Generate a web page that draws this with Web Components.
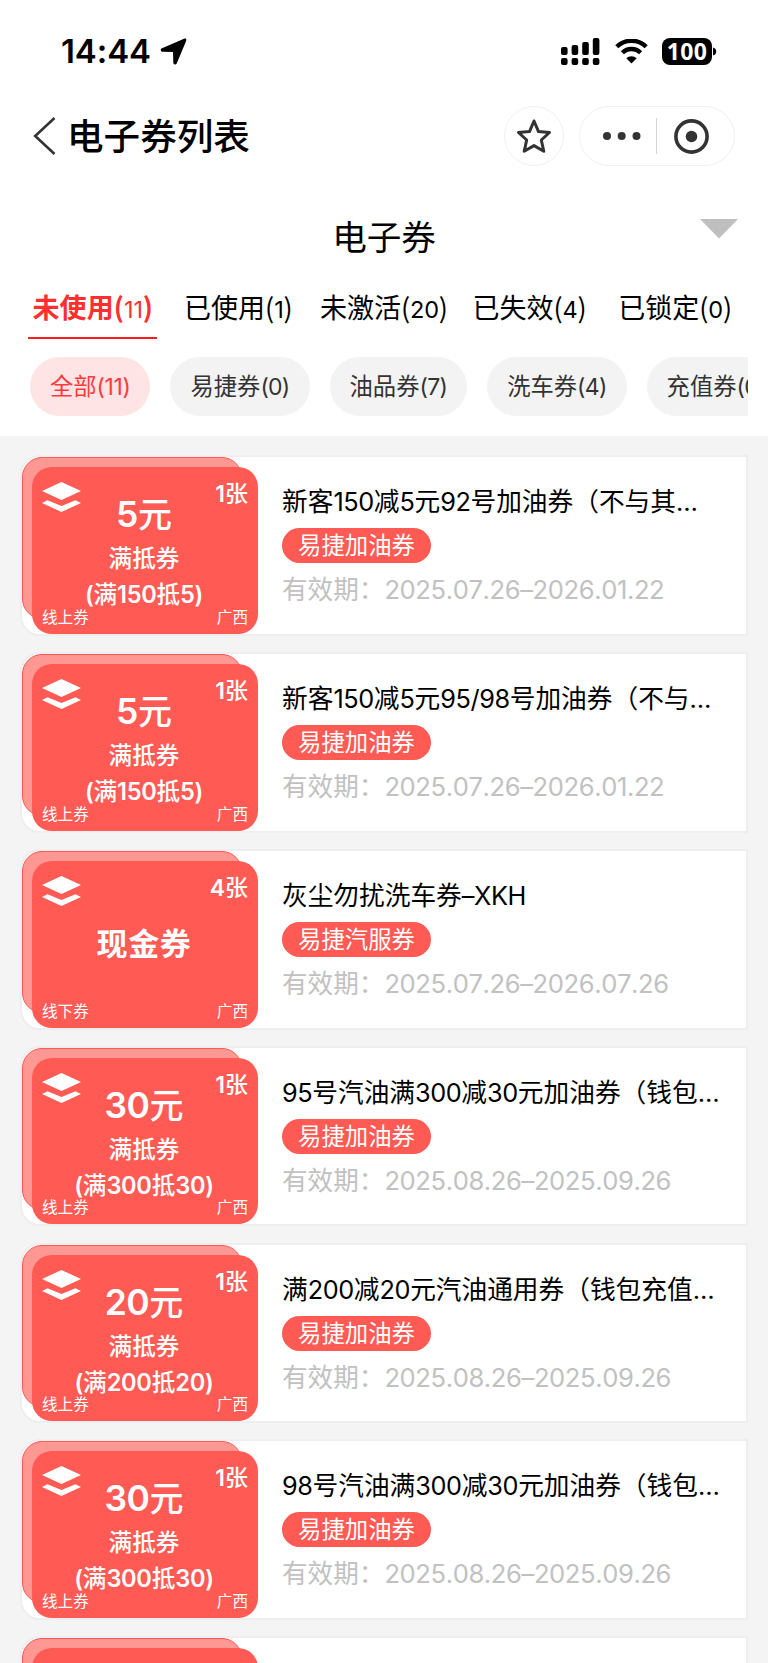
<!DOCTYPE html>
<html lang="zh-CN">
<head>
<meta charset="UTF-8">
<title>电子券列表</title>
<style>
    body {
        margin: 0;
        width: 768px;
        height: 1663px;
        overflow: hidden;
        background: #f4f4f4;
        color: #000;
        font-family: Inter, "Noto Sans CJK SC", sans-serif;
    }
</style>
</head>
<body>
<coupon-app></coupon-app>
<script>
const CJK = '"Noto Sans CJK SC", sans-serif';

// latin runs sit next to CJK glyphs, so they get their own size and tracking
function mixed(text) {
    return text.replace(/[0-9A-Z().\/–…-]+/g, run => `<span class="n">${run}</span>`);
}

class StatusBar extends HTMLElement {
    // language=CSS
    static style = `
        :host {
            display: flex;
            align-items: center;
            height: 102px;
            padding: 0 51px 0 61px;
        }
        .time { font: 600 33px/40px Inter, sans-serif; letter-spacing: -0.1px; width: 99px; white-space: nowrap; }
        .gap { flex: 1; }
        svg { display: block; }
        .wifi { margin: 0 14px 0 15px; }
        .battery {
            width: 50px;
            height: 27px;
            border-radius: 8px;
            background: #000;
            color: #fff;
            font: 700 23px/27px "Noto Sans", sans-serif;
            letter-spacing: 0.3px;
            text-align: center;
        }
    `;

    constructor() {
        super();
        this.attachShadow({mode: 'open'});
    }

    connectedCallback() {
        const bars = [0, 1, 2, 3].map(i => {
            const top = [9, 7, 4, 0][i];
            return `<rect x="${i * 10.6}" y="${top}" width="6.6" height="${17 - top}" rx="2"/>
                    <rect x="${i * 10.6}" y="20" width="6.6" height="7" rx="2"/>`;
        }).join('');

        this.shadowRoot.innerHTML = `
          <style>${StatusBar.style}</style>
          <div class="time">14:44</div>
          <svg width="27" height="27" viewBox="0 0 27 27"><path d="M24 .7 2 10.200c-2 .9-1.600 3.400.6 3.500l10.400.3.300 10.600c.1 2.200 2.600 2.500 3.500.6L26 3.200C26.800 1.300 26 0 24 .7z"/></svg>
          <div class="gap"></div>
          <svg width="39" height="27" viewBox="0 0 39 27">${bars}</svg>
          <svg class="wifi" width="33" height="25" viewBox="0 0 33 25">
            <path d="M1.800 7.800a20.800 20.800 0 0 1 29.400 0M7.400 13.700a12.900 12.900 0 0 1 18.200 0" fill="none" stroke="#000" stroke-width="4.400"/>
            <path d="M16.500 24.500 11.300 19.300a7.400 7.400 0 0 1 10.400 0z"/>
          </svg>
          <div class="battery">100</div>
          <svg width="5" height="9" viewBox="0 0 5 9"><path d="M1 .5c2.700.8 3.200 2.500 3.200 4S3.700 7.700 1 8.500z"/></svg>
        `;
    }
}

class NavBar extends HTMLElement {
    // language=CSS
    static style = `
        :host {
            display: flex;
            align-items: center;
            height: 68px;
            padding: 0 33px;
        }
        svg { display: block; }
        h1 { flex: 1; margin: -2px 0 0 11px; font: 500 36.6px/50px ${CJK}; }
        .round, .pill {
            box-sizing: border-box;
            height: 60px;
            border: 1px solid #f0f0f0;
            border-radius: 30px;
            display: flex;
            align-items: center;
        }
        .round { width: 60px; justify-content: center; margin-right: 15px; }
        .pill { width: 156px; padding-left: 22px; }
        .line { width: 1px; height: 36px; background: #d5d5d5; margin: 0 17px 0 15px; }
    `;

    constructor() {
        super();
        this.attachShadow({mode: 'open'});
    }

    connectedCallback() {
        this.shadowRoot.innerHTML = `
          <style>${NavBar.style}</style>
          <svg width="23" height="38" viewBox="0 0 23 38"><path d="M21.500 1 2.200 19 21.500 37" fill="none" stroke="#333" stroke-width="2.600"/></svg>
          <h1><slot></slot></h1>
          <div class="round">
            <svg width="36" height="36" viewBox="0 0 36 36"><path d="m18 3 4.500 10.600L33.500 14.500 25.300 22 27.800 33.300 18 27.600 8.200 33.300 10.700 22 2.500 14.500 13.500 13.600z" fill="none" stroke="#333" stroke-width="3" stroke-linejoin="round"/></svg>
          </div>
          <div class="pill">
            <svg width="39" height="8" viewBox="0 0 39 8" fill="#333"><circle cx="5" cy="4" r="4"/><circle cx="19.700" cy="4" r="4"/><circle cx="34.500" cy="4" r="4"/></svg>
            <div class="line"></div>
            <svg width="35" height="35" viewBox="0 0 35 35"><circle cx="17.500" cy="17.500" r="15.600" fill="none" stroke="#333" stroke-width="3.600"/><circle cx="17.500" cy="17.500" r="5.800" fill="#333"/></svg>
          </div>
        `;
    }
}

class TabItem extends HTMLElement {
    // language=CSS
    static style = `
        :host {
            flex: 1;
            display: flex;
            justify-content: center;
            font: 400 27px/38px ${CJK};
            white-space: nowrap;
        }
        div { box-sizing: border-box; height: 51px; padding: 0 4px; border-bottom: 2px solid transparent; }
        span { font: 400 23.5px/1 Inter, sans-serif; letter-spacing: -0.2px; }
        :host([active]) { color: #fe302f; font-weight: 700; letter-spacing: 0.1px; }
        :host([active]) div { border-color: #fd1f1f; }
    `;

    constructor() {
        super();
        this.attachShadow({mode: 'open'});
    }

    connectedCallback() {
        this.shadowRoot.innerHTML = `
          <style>${TabItem.style}</style>
          <div><slot></slot>(<span>${this.getAttribute('count')}</span>)</div>
        `;
    }
}

class FilterChip extends HTMLElement {
    // language=CSS
    static style = `
        :host {
            flex: none;
            box-sizing: border-box;
            height: 59px;
            padding: 0 20px;
            border-radius: 30px;
            background: #f3f3f3;
            color: #333;
            font: 400 23.300px/56px ${CJK};
            white-space: nowrap;
        }
        span { font: 400 23px/1 Inter, sans-serif; letter-spacing: -0.700px; }
        :host([active]) { background: #ffe4e6; color: #fe3a3a; }
        :host([active]) span { letter-spacing: -0.400px; }
    `;

    constructor() {
        super();
        this.attachShadow({mode: 'open'});
    }

    connectedCallback() {
        this.shadowRoot.innerHTML = `
          <style>${FilterChip.style}</style>
          <slot></slot><span>(${this.getAttribute('count')})</span>
        `;
    }
}

class CouponTicket extends HTMLElement {
    // language=CSS
    static style = `
        :host {
            flex: none;
            display: grid;
            width: 236px;
            color: #fff;
            font-family: Inter, ${CJK};
            white-space: nowrap;
        }
        .back, .front { grid-area: 1 / 1; box-sizing: border-box; border-radius: 20px; background: #ff5a54; }
        .back { width: 220px; height: 162px; background: #ff9792; border: 1.500px solid #ff5a54; }
        .front {
            margin: 10px 0 0 10px;
            display: grid;
            grid-template-rows: 29px minmax(0, 1fr) 24px;
            padding: 15px 10px 5px;
        }
        .row { display: flex; justify-content: space-between; }
        svg { display: block; }
        .count { font-size: 23px; font-weight: 500; line-height: 24px; }
        .count .n { font-size: 23px; font-weight: 600; }
        .body {
            display: flex;
            flex-direction: column;
            align-items: center;
            font-size: 23.600px;
            font-weight: 500;
            margin: -28px 2px -13px 0;
        }
        .amount { font-size: 34px; line-height: 50px; margin-top: 7px; }
        .amount .n { font-size: 35.500px; font-weight: 600; letter-spacing: -0.500px; }
        .kind { line-height: 34px; margin-top: 2px; }
        .rule { line-height: 34px; margin-top: 2px; }
        .rule .n { font-weight: 600; letter-spacing: -0.300px; }
        .cash { font-size: 31px; font-weight: 700; line-height: 40px; margin: auto; letter-spacing: 0.600px; }
        .foot { font-size: 15.600px; line-height: 22px; align-items: end; }
    `;

    constructor() {
        super();
        this.attachShadow({mode: 'open'});
    }

    connectedCallback() {
        const rule = this.getAttribute('rule');
        const amount = this.getAttribute('amount');
        const body = rule
            ? `<div class="amount">${mixed(amount)}</div><div class="kind">满抵券</div><div class="rule">${mixed(rule)}</div>`
            : `<div class="cash">${amount}</div>`;

        // a ticket without an amount is only the two stacked shapes
        const content = `
            <div class="row">
              <svg width="39" height="30" viewBox="0 0 39 30" fill="#fff"><path d="M19.500 0 39 9 19.500 18 0 9z"/><path d="M5.500 18.300 19.500 24 33.500 18.300 39 20.900 19.500 30 0 20.900z"/></svg>
              <div class="count">${mixed(this.getAttribute('count') || '')}</div>
            </div>
            <div class="body">${body}</div>
            <div class="row foot"><span>${this.getAttribute('channel')}</span><span>广西</span></div>
        `;

        this.shadowRoot.innerHTML = `
          <style>${CouponTicket.style}</style>
          <div class="back"></div>
          <div class="front">${amount ? content : ''}</div>
        `;
    }
}

class CouponCard extends HTMLElement {
    // language=CSS
    static style = `
        :host {
            flex: none;
            box-sizing: border-box;
            display: flex;
            height: 180.800px;
            background: #fff;
            border: 2px solid #eee;
            border-radius: 20px 0 0 20px;
            font-family: Inter, ${CJK};
            font-kerning: none;
            white-space: nowrap;
        }
        .info { padding: 26px 0 0 24px; }
        .name { font-size: 25.700px; line-height: 38px; }
        .name .n { font-size: 25.300px; letter-spacing: -0.400px; }
        .tag {
            display: table;
            padding: 0 16px 0 16px;
            margin-top: 7px;
            border-radius: 18px;
            background: #ff5a54;
            color: #fff;
            font-size: 23.400px;
            line-height: 35px;
        }
        .date { margin-top: 8px; font-size: 25.600px; line-height: 38px; color: #c1c1c1; }
        .date .n { letter-spacing: -0.400px; }
    `;

    constructor() {
        super();
        this.attachShadow({mode: 'open'});
    }

    connectedCallback() {
        const name = this.getAttribute('name');
        const info = name ? `
          <div class="info">
            <div class="name">${mixed(name)}</div>
            <div class="tag">${this.getAttribute('tag')}</div>
            <div class="date">${mixed('有效期：' + this.getAttribute('date'))}</div>
          </div>` : '';

        this.shadowRoot.innerHTML = `
          <style>${CouponCard.style}</style>
          <slot></slot>
          ${info}
        `;
    }
}

class CouponApp extends HTMLElement {
    static tabs = [['未使用', 11], ['已使用', 1], ['未激活', 20], ['已失效', 4], ['已锁定', 0]];

    static chips = [['全部', 11], ['易捷券', 0], ['油品券', 7], ['洗车券', 4], ['充值券', 0]];

    static coupons = [
        ['5元', '(满150抵5)', '1张', '线上券', '新客150减5元92号加油券（不与其…', '易捷加油券', '2025.07.26–2026.01.22'],
        ['5元', '(满150抵5)', '1张', '线上券', '新客150减5元95/98号加油券（不与…', '易捷加油券', '2025.07.26–2026.01.22'],
        ['现金券', '', '4张', '线下券', '灰尘勿扰洗车券–XKH', '易捷汽服券', '2025.07.26–2026.07.26'],
        ['30元', '(满300抵30)', '1张', '线上券', '95号汽油满300减30元加油券（钱包…', '易捷加油券', '2025.08.26–2025.09.26'],
        ['20元', '(满200抵20)', '1张', '线上券', '满200减20元汽油通用券（钱包充值…', '易捷加油券', '2025.08.26–2025.09.26'],
        ['30元', '(满300抵30)', '1张', '线上券', '98号汽油满300减30元加油券（钱包…', '易捷加油券', '2025.08.26–2025.09.26'],
    ];

    // language=CSS
    static style = `
        :host { display: flex; flex-direction: column; height: 1663px; overflow: hidden; }
        header { flex: none; background: #fff; height: 436px; }
        .title {
            display: grid;
            grid-template-columns: 1fr auto 1fr;
            height: 118px;
            padding: 0 30px 0 30px;
        }
        h2 { grid-column: 2; margin: 40px 0 0; font: 400 34.600px/50px ${CJK}; }
        .arrow { justify-self: end; margin-top: 49px; }
        .tabs { display: flex; width: 728px; margin-left: 20px; }
        .chips { display: flex; gap: 20px; margin: 18px 20px 0 30px; overflow: hidden; }
        main { flex: 1; min-height: 0; display: flex; flex-direction: column; gap: 16.100px; padding: 19px 20px 0; overflow: hidden; }
    `;

    constructor() {
        super();
        this.attachShadow({mode: 'open'});
    }

    connectedCallback() {
        const {tabs, chips, coupons} = CouponApp;

        this.shadowRoot.innerHTML = `
          <style>${CouponApp.style}</style>
          <header>
            <status-bar></status-bar>
            <nav-bar>电子券列表</nav-bar>
            <div class="title">
              <h2>电子券</h2>
              <svg class="arrow" width="38" height="20" viewBox="0 0 38 20"><path d="M0 0h38L19 19.500z" fill="#bfbfbf"/></svg>
            </div>
            <div class="tabs">
              ${tabs.map(([label, n], i) => `<tab-item count="${n}" ${i ? '' : 'active'}>${label}</tab-item>`).join('')}
            </div>
            <div class="chips">
              ${chips.map(([label, n], i) => `<filter-chip count="${n}" ${i ? '' : 'active'}>${label}</filter-chip>`).join('')}
            </div>
          </header>
          <main>
            ${coupons.map(([amount, rule, count, channel, name, tag, date]) => `
              <coupon-card name="${name}" tag="${tag}" date="${date}">
                <coupon-ticket amount="${amount}" rule="${rule}" count="${count}" channel="${channel}"></coupon-ticket>
              </coupon-card>`).join('')}
            <coupon-card><coupon-ticket></coupon-ticket></coupon-card>
          </main>
        `;
    }
}

customElements.define('status-bar', StatusBar);
customElements.define('nav-bar', NavBar);
customElements.define('tab-item', TabItem);
customElements.define('filter-chip', FilterChip);
customElements.define('coupon-ticket', CouponTicket);
customElements.define('coupon-card', CouponCard);
customElements.define('coupon-app', CouponApp);
</script>
</body>
</html>
